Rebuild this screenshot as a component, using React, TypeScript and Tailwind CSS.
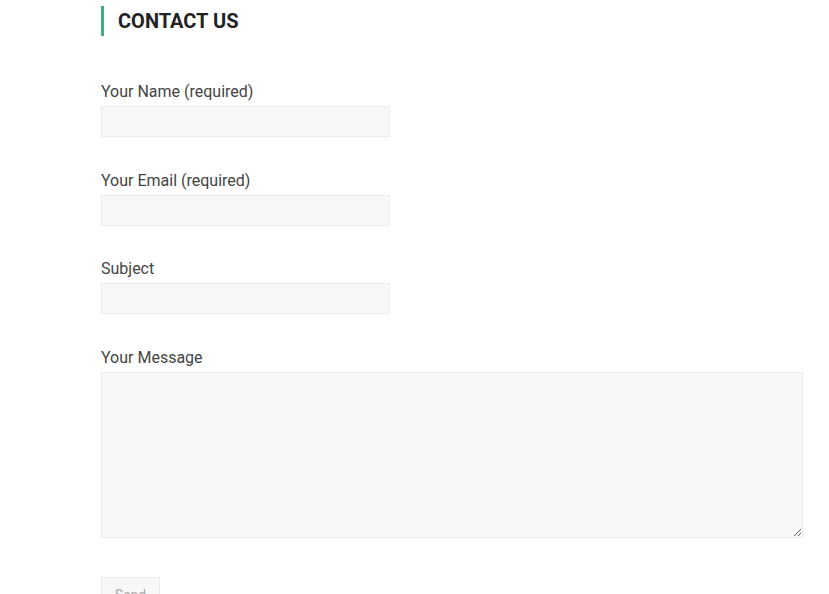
import React from "react";

const Field = ({ label, tall = false, className = "" }: { label: string; tall?: boolean; className?: string }) => (
  <div className={`flex flex-col ${className}`}>
    <label className="pt-[1px] text-[16px] leading-[24px] text-[#444]">{label}</label>
    {tall ? (
      <textarea className="mt-[2px] h-[166px] w-[702px] border border-[#ebebeb] bg-[#f8f8f8] outline-none" />
    ) : (
      <input className="mt-[2px] h-[31px] w-[289px] border border-[#ebebeb] bg-[#f8f8f8] outline-none" />
    )}
  </div>
);

export default function App() {
  return (
    <div
      className="h-[594px] w-[829px] overflow-hidden bg-white"
      style={{ fontFamily: "Roboto, 'Liberation Sans', sans-serif" }}
    >
      <div className="pl-[101px] pt-[6px]">
        <div className="flex h-[30px] items-center border-l-[3px] border-[#3aaf8c] pl-[14px]">
          <h2 className="text-[20px] font-bold leading-none text-[#222]">CONTACT US</h2>
        </div>
        <div className="mt-[43px] flex flex-col">
          <Field label="Your Name (required)" />
          <Field label="Your Email (required)" className="mt-[31px]" />
          <Field label="Subject" className="mt-[30px]" />
          <Field label="Your Message" tall className="mt-[31px]" />
        </div>
        <button className="mt-[39px] h-[36px] w-[59px] border border-[#ebebeb] bg-[#f8f8f8] text-[14px] text-[#aaa]">
          Send
        </button>
      </div>
    </div>
  );
}
